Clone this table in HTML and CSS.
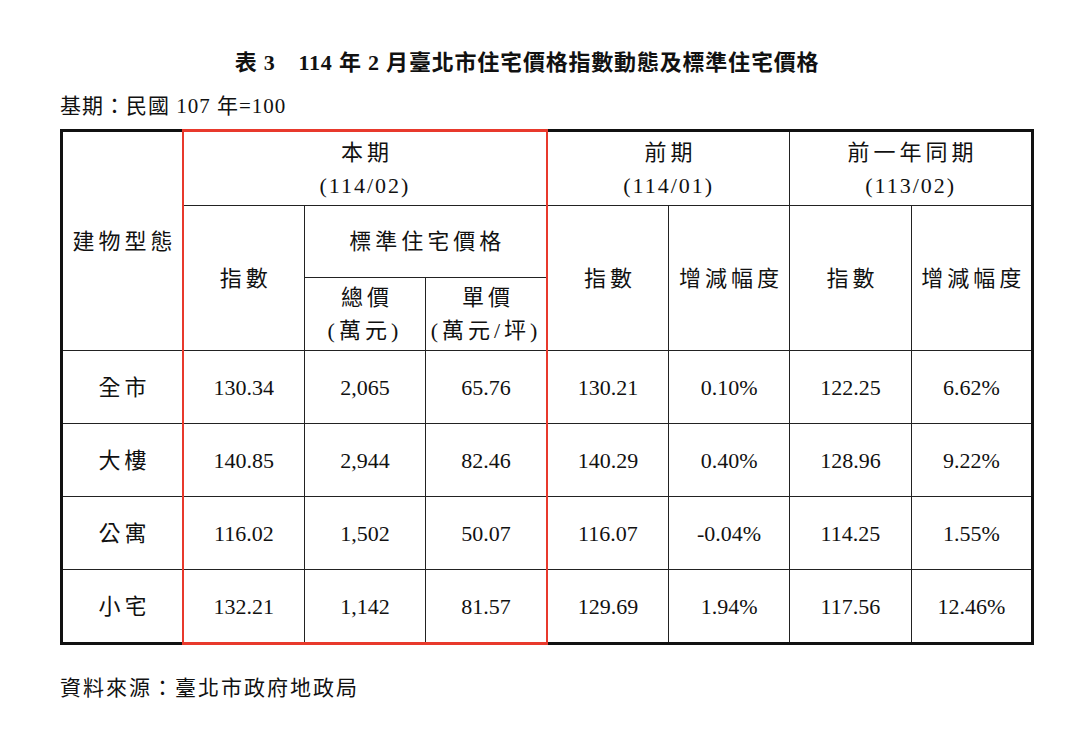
FILE: index.html
```html
<!DOCTYPE html>
<html lang="zh-Hant">
<head>
<meta charset="utf-8">
<title>表3 114年2月臺北市住宅價格指數動態及標準住宅價格</title>
<link rel="stylesheet" href="styles.css">
</head>
<body>
<div class="page">
  <h1 class="title">表 3　114 年 2 月臺北市住宅價格指數動態及標準住宅價格</h1>
  <p class="base">基期：民國 107 年=100</p>
  <table class="grid">
    <colgroup>
      <col><col><col><col><col><col><col><col>
    </colgroup>
    <thead>
      <tr class="h1">
        <th rowspan="3" class="zh">建物型態</th>
        <th colspan="3" class="zh cur-top cur-l cur-r">本期<br><span class="num">(114/02)</span></th>
        <th colspan="2" class="zh">前期<br><span class="num">(114/01)</span></th>
        <th colspan="2" class="zh">前一年同期<br><span class="num">(113/02)</span></th>
      </tr>
      <tr class="h2">
        <th rowspan="2" class="zh cur-l">指數</th>
        <th colspan="2" class="zh cur-r">標準住宅價格</th>
        <th rowspan="2" class="zh">指數</th>
        <th rowspan="2" class="zh">增減幅度</th>
        <th rowspan="2" class="zh">指數</th>
        <th rowspan="2" class="zh">增減幅度</th>
      </tr>
      <tr class="h3">
        <th class="zh">總價<br>(萬元)</th>
        <th class="zh cur-r">單價<br>(萬元/坪)</th>
      </tr>
    </thead>
    <tbody>
      <tr>
        <td class="zh">全市</td>
        <td class="cur-l">130.34</td><td>2,065</td><td class="cur-r">65.76</td>
        <td>130.21</td><td>0.10%</td><td>122.25</td><td>6.62%</td>
      </tr>
      <tr>
        <td class="zh">大樓</td>
        <td class="cur-l">140.85</td><td>2,944</td><td class="cur-r">82.46</td>
        <td>140.29</td><td>0.40%</td><td>128.96</td><td>9.22%</td>
      </tr>
      <tr>
        <td class="zh">公寓</td>
        <td class="cur-l">116.02</td><td>1,502</td><td class="cur-r">50.07</td>
        <td>116.07</td><td>-0.04%</td><td>114.25</td><td>1.55%</td>
      </tr>
      <tr class="last">
        <td class="zh">小宅</td>
        <td class="cur-l cur-b">132.21</td><td class="cur-b">1,142</td><td class="cur-r cur-b">81.57</td>
        <td>129.69</td><td>1.94%</td><td>117.56</td><td>12.46%</td>
      </tr>
    </tbody>
  </table>
  <p class="source">資料來源：臺北市政府地政局</p>
</div>
</body>
</html>
```
FILE: styles.css
```css
html, body {
  margin: 0;
  padding: 0;
  background: #ffffff;
}

body {
  font-family: "Liberation Serif", "Noto Sans CJK TC", serif;
  color: #111111;
}

.page {
  width: 972px;
  padding: 49px 0 0 60px;
}

.title {
  margin: 0;
  padding-right: 38px;
  text-align: center;
  font-size: 22px;
  font-weight: bold;
  line-height: 28px;
  letter-spacing: 0.8px;
}

.base {
  margin: 15px 0 0 0;
  font-size: 21px;
  line-height: 28px;
  letter-spacing: 1px;
}

.grid {
  margin-top: 9px;
  width: 974px;
  table-layout: fixed;
  border-collapse: collapse;
  border: 3px solid #111111;
}

.grid col {
  width: 12.5%;
}

.grid th,
.grid td {
  border: 1px solid #222222;
  padding: 0;
  text-align: center;
  vertical-align: middle;
  font-size: 22px;
  font-weight: normal;
  line-height: 33px;
}

.grid .zh {
  letter-spacing: 4px;
  text-indent: 4px;
}

.grid .num {
  letter-spacing: 2px;
}

.h1 { height: 75px; }
.h2 { height: 72px; }
.h3 { height: 73px; }
.grid tbody tr { height: 73px; }
.grid tbody tr.last { height: 74px; }

.grid .cur-l { border-left: 2px solid #e8392c; }
.grid .cur-r { border-right: 2px solid #e8392c; }
.grid .cur-top { border-top: 3px solid #e8392c; }
.grid .cur-b { border-bottom: 3px solid #e8392c; }

.source {
  margin: 29px 0 0 0;
  font-size: 21px;
  line-height: 28px;
  letter-spacing: 2px;
}
```
